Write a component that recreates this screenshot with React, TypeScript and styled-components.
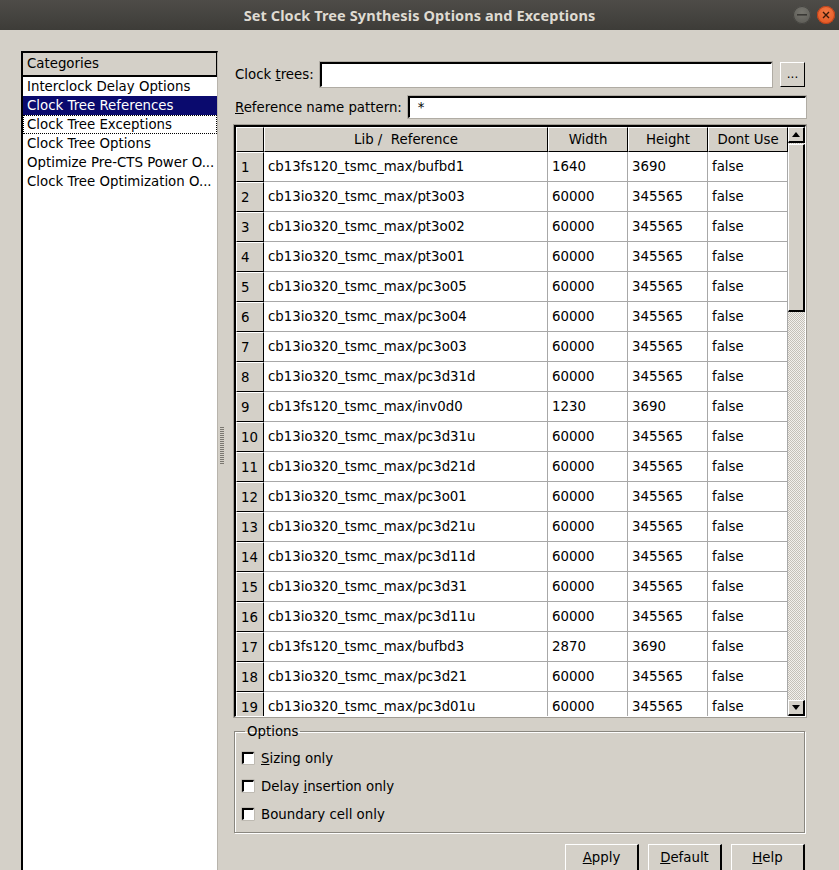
import React from "react";
import styled, { createGlobalStyle } from "styled-components";

const GlobalStyle = createGlobalStyle`
  html, body {
    margin: 0;
    padding: 0;
    background: #d4d0c8;
  }
  body {
    font-family: "DejaVu Sans", "Noto Sans", sans-serif;
    font-size: 13.33px;
    color: #000;
  }
`;

const Window = styled.div`
  width: 839px;
  height: 870px;
  overflow: hidden;
  display: flex;
  flex-direction: column;
  background: #d4d0c8;
`;

const TitleBar = styled.div`
  height: 30px;
  flex: none;
  display: flex;
  align-items: center;
  justify-content: center;
  position: relative;
  background: linear-gradient(#4e4c48, #3d3c38);
  color: #dfdbd2;
  font-family: "Noto Sans", "DejaVu Sans", sans-serif;
  font-weight: bold;
  font-size: 14.5px;
  letter-spacing: 0.1px;
`;

const WinButtons = styled.div`
  position: absolute;
  right: 4px;
  top: 6px;
  display: flex;
  gap: 6px;
`;

const WinButton = styled.div<{ $close?: boolean }>`
  width: 18px;
  height: 18px;
  border-radius: 50%;
  display: flex;
  align-items: center;
  justify-content: center;
  background: ${(p) =>
    p.$close
      ? "radial-gradient(circle at 50% 35%, #f47a45, #e0501c)"
      : "radial-gradient(circle at 50% 35%, #77766f, #575651)"};
  box-shadow: inset 0 0 0 1px ${(p) => (p.$close ? "#b8401a" : "#44433f")};
`;

const Body = styled.div`
  flex: 1;
  display: flex;
  padding: 21px 0 0 21px;
  min-height: 0;
`;

const CategoryList = styled.div`
  width: 194px;
  flex: none;
  background: #fff;
  border-top: 2px solid #000;
  border-left: 2px solid #000;
  border-right: 1px solid #b8b4ac;
  display: flex;
  flex-direction: column;
`;

const CategoryHeader = styled.div`
  height: 22px;
  line-height: 22px;
  padding-left: 4px;
  background: #d4d0c8;
  border-bottom: 2px solid #000;
  border-right: 1px solid #000;
`;

const CategoryItem = styled.div<{ $selected?: boolean; $focus?: boolean }>`
  height: 19px;
  box-sizing: border-box;
  line-height: 17px;
  padding-left: 3px;
  white-space: nowrap;
  overflow: hidden;
  background: ${(p) => (p.$selected ? "#0a0a6e" : "#fff")};
  color: ${(p) => (p.$selected ? "#fff" : "#000")};
  border: 1px ${(p) => (p.$focus ? "dotted #000" : "solid transparent")};
`;

const Splitter = styled.div`
  width: 16px;
  flex: none;
  display: flex;
  align-items: center;
  padding-bottom: 30px;
`;

const Grip = styled.div`
  width: 4px;
  height: 38px;
  margin-left: 2px;
  background: repeating-linear-gradient(
    #7a7770 0 1px,
    transparent 1px 2px
  );
`;

const Right = styled.div`
  width: 572px;
  flex: none;
  display: flex;
  flex-direction: column;
  padding-top: 11px;
  & > * {
    flex-shrink: 0;
  }
`;

const FieldRow = styled.div<{ $gap: number }>`
  display: flex;
  align-items: center;
  margin-bottom: ${(p) => p.$gap}px;
  padding-left: 1px;
`;

const Label = styled.span`
  white-space: pre;
  margin-right: 6px;
`;

const U = styled.span`
  text-decoration: underline;
`;

const TextInput = styled.div<{ $h: number }>`
  flex: 1;
  height: ${(p) => p.$h}px;
  box-sizing: border-box;
  background: #fff;
  border-top: 2px solid #000;
  border-left: 2px solid #000;
  border-bottom: 1px solid #fff;
  border-right: 1px solid #fff;
  box-shadow: 0 0 0 1px #b0aca4;
  padding-left: 8px;
  line-height: ${(p) => p.$h - 3}px;
`;

const SmallButton = styled.div`
  width: 25px;
  height: 25px;
  box-sizing: border-box;
  margin-left: 8px;
  margin-right: 1px;
  border-top: 1px solid #fff;
  border-left: 1px solid #fff;
  border-right: 1px solid #000;
  border-bottom: 1px solid #000;
  display: flex;
  align-items: center;
  justify-content: center;
  font-size: 12px;
  padding-bottom: 2px;
`;

const TableBox = styled.div`
  height: 592px;
  width: 572px;
  box-sizing: border-box;
  border-top: 2px solid #000;
  border-left: 2px solid #000;
  border-bottom: 1px solid #fff;
  border-right: 1px solid #fff;
  box-shadow: 0 0 0 1px #a09c94;
  display: flex;
  overflow: hidden;
  margin-bottom: 16px;
`;

const Grid = styled.div`
  flex: 1;
  display: grid;
  grid-template-columns: 28px 284px 80px 80px 80px;
  grid-auto-rows: 30px;
  grid-template-rows: 25px;
  align-content: start;
  overflow: hidden;
  background: #fff;
`;

const HeadCell = styled.div`
  background: #d4d0c8;
  box-sizing: border-box;
  border-top: 1px solid #fff;
  border-left: 1px solid #fff;
  border-right: 1px solid #000;
  border-bottom: 1px solid #000;
  display: flex;
  align-items: center;
  justify-content: center;
  white-space: pre;
`;

const RowNum = styled(HeadCell)`
  justify-content: flex-start;
  padding-left: 4px;
`;

const Cell = styled.div`
  box-sizing: border-box;
  border-right: 1px solid #a8a8a8;
  border-bottom: 1px solid #a8a8a8;
  display: flex;
  align-items: center;
  padding-left: 4px;
  white-space: nowrap;
  overflow: hidden;
`;

const ScrollBar = styled.div`
  width: 17px;
  flex: none;
  display: flex;
  flex-direction: column;
  background-color: #fff;
  background-image: repeating-conic-gradient(#c4c0b8 0 25%, #f2f0ec 0 50%);
  background-size: 2px 2px;
`;

const ArrowBtn = styled.div`
  height: 16px;
  flex: none;
  box-sizing: border-box;
  background: #d4d0c8;
  border-top: 1px solid #fff;
  border-left: 1px solid #fff;
  border-right: 2px solid #000;
  border-bottom: 2px solid #000;
  display: flex;
  align-items: center;
  justify-content: center;
`;

const Thumb = styled.div`
  height: 168px;
  flex: none;
  box-sizing: border-box;
  margin-top: 1px;
  background: #d4d0c8;
  border-top: 1px solid #fff;
  border-left: 1px solid #fff;
  border-right: 2px solid #000;
  border-bottom: 2px solid #000;
`;

const Track = styled.div`
  flex: 1;
`;

const Group = styled.fieldset`
  margin: -9px 1px 0 0;
  padding: 10px 0 8px 7px;
  height: 109px;
  box-sizing: border-box;
  border: 1px solid #8a8780;
  box-shadow: 1px 1px 0 #fff, inset 1px 1px 0 #fff;
  display: flex;
  flex-direction: column;
  gap: 10px;
`;

const Legend = styled.legend`
  padding: 0 2px;
  margin-left: 3px;
`;

const CheckRow = styled.label`
  display: flex;
  align-items: center;
  gap: 7px;
  height: 18px;
`;

const Box = styled.span`
  width: 12px;
  height: 12px;
  box-sizing: border-box;
  background: #fff;
  border-top: 2px solid #000;
  border-left: 2px solid #000;
  border-right: 1px solid #fff;
  border-bottom: 1px solid #fff;
  box-shadow: 0 0 0 0.5px #a8a49c;
`;

const ButtonRow = styled.div`
  display: flex;
  justify-content: flex-end;
  gap: 9px;
  margin-top: 11px;
  padding-right: 1px;
`;

const DlgButton = styled.div`
  width: 74px;
  height: 32px;
  box-sizing: border-box;
  border-top: 1px solid #fff;
  border-left: 1px solid #fff;
  border-right: 2px solid #000;
  border-bottom: 2px solid #000;
  display: flex;
  align-items: flex-start;
  justify-content: center;
  padding-top: 5px;
`;

const rows: [string, string, string][] = [
  ["cb13fs120_tsmc_max/bufbd1", "1640", "3690"],
  ["cb13io320_tsmc_max/pt3o03", "60000", "345565"],
  ["cb13io320_tsmc_max/pt3o02", "60000", "345565"],
  ["cb13io320_tsmc_max/pt3o01", "60000", "345565"],
  ["cb13io320_tsmc_max/pc3o05", "60000", "345565"],
  ["cb13io320_tsmc_max/pc3o04", "60000", "345565"],
  ["cb13io320_tsmc_max/pc3o03", "60000", "345565"],
  ["cb13io320_tsmc_max/pc3d31d", "60000", "345565"],
  ["cb13fs120_tsmc_max/inv0d0", "1230", "3690"],
  ["cb13io320_tsmc_max/pc3d31u", "60000", "345565"],
  ["cb13io320_tsmc_max/pc3d21d", "60000", "345565"],
  ["cb13io320_tsmc_max/pc3o01", "60000", "345565"],
  ["cb13io320_tsmc_max/pc3d21u", "60000", "345565"],
  ["cb13io320_tsmc_max/pc3d11d", "60000", "345565"],
  ["cb13io320_tsmc_max/pc3d31", "60000", "345565"],
  ["cb13io320_tsmc_max/pc3d11u", "60000", "345565"],
  ["cb13fs120_tsmc_max/bufbd3", "2870", "3690"],
  ["cb13io320_tsmc_max/pc3d21", "60000", "345565"],
  ["cb13io320_tsmc_max/pc3d01u", "60000", "345565"],
];

const categories = [
  "Interclock Delay Options",
  "Clock Tree References",
  "Clock Tree Exceptions",
  "Clock Tree Options",
  "Optimize Pre-CTS Power O...",
  "Clock Tree Optimization O...",
];

const Arrow = ({ up }: { up?: boolean }) => (
  <svg width="8" height="5" viewBox="0 0 8 5">
    <polygon points={up ? "0,5 8,5 4,0" : "0,0 8,0 4,5"} fill="#000" />
  </svg>
);

export default function App() {
  return (
    <Window>
      <GlobalStyle />
      <TitleBar>
        Set Clock Tree Synthesis Options and Exceptions
        <WinButtons>
          <WinButton>
            <svg width="10" height="2" viewBox="0 0 10 2">
              <rect width="10" height="1.6" fill="#3a3935" />
            </svg>
          </WinButton>
          <WinButton $close>
            <svg width="8" height="8" viewBox="0 0 8 8">
              <path d="M1 1 L7 7 M7 1 L1 7" stroke="#3a1a0a" strokeWidth="1.4" />
            </svg>
          </WinButton>
        </WinButtons>
      </TitleBar>

      <Body>
        <CategoryList>
          <CategoryHeader>Categories</CategoryHeader>
          {categories.map((c, i) => (
            <CategoryItem key={c} $selected={i === 1} $focus={i === 2}>
              {c}
            </CategoryItem>
          ))}
        </CategoryList>

        <Splitter>
          <Grip />
        </Splitter>

        <Right>
          <FieldRow $gap={9}>
            <Label>
              Clock <U>t</U>rees:
            </Label>
            <TextInput $h={25} />
            <SmallButton>...</SmallButton>
          </FieldRow>
          <FieldRow $gap={7}>
            <Label>
              <U>R</U>eference name pattern:
            </Label>
            <TextInput $h={22}>*</TextInput>
          </FieldRow>

          <TableBox>
            <Grid>
              <HeadCell />
              <HeadCell>Lib /  Reference</HeadCell>
              <HeadCell>Width</HeadCell>
              <HeadCell>Height</HeadCell>
              <HeadCell>Dont Use</HeadCell>
              {rows.map(([ref, w, h], i) => (
                <React.Fragment key={i}>
                  <RowNum>{i + 1}</RowNum>
                  <Cell>{ref}</Cell>
                  <Cell>{w}</Cell>
                  <Cell>{h}</Cell>
                  <Cell>false</Cell>
                </React.Fragment>
              ))}
            </Grid>
            <ScrollBar>
              <ArrowBtn>
                <Arrow up />
              </ArrowBtn>
              <Thumb />
              <Track />
              <ArrowBtn>
                <Arrow />
              </ArrowBtn>
            </ScrollBar>
          </TableBox>

          <Group>
            <Legend>Options</Legend>
            <CheckRow>
              <Box />
              <span>
                <U>S</U>izing only
              </span>
            </CheckRow>
            <CheckRow>
              <Box />
              <span>
                Delay <U>i</U>nsertion only
              </span>
            </CheckRow>
            <CheckRow>
              <Box />
              <span>Boundary cell only</span>
            </CheckRow>
          </Group>

          <ButtonRow>
            <DlgButton>
              <span>
                <U>A</U>pply
              </span>
            </DlgButton>
            <DlgButton>
              <span>
                <U>D</U>efault
              </span>
            </DlgButton>
            <DlgButton>
              <span>
                <U>H</U>elp
              </span>
            </DlgButton>
          </ButtonRow>
        </Right>
      </Body>
    </Window>
  );
}
